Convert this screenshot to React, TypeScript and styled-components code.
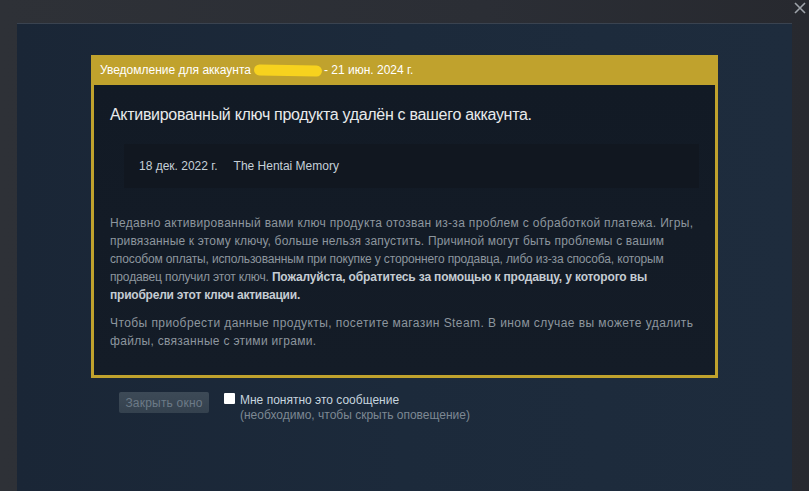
import React, { useState } from "react"
import styled, { createGlobalStyle } from "styled-components"

const GlobalStyle = createGlobalStyle`
  html, body {
    margin: 0;
    padding: 0;
    background: #2c2f35;
  }
  body {
    font-family: Arial, "Liberation Sans", sans-serif;
  }
`

const Window = styled.div`
  position: relative;
  width: 809px;
  height: 491px;
  box-sizing: border-box;
  padding: 23px 17px 0 17px;
  background: linear-gradient(90deg, #2e3137 0%, #2b2e35 60%, #27292f 100%);
  overflow: hidden;
`

const CloseButton = styled.div`
  position: absolute;
  top: 1px;
  right: 2px;
  width: 14px;
  height: 14px;
  display: flex;
  align-items: center;
  justify-content: center;
`

const Panel = styled.div`
  height: 100%;
  box-sizing: border-box;
  border-top: 1px solid #3a4350;
  background: linear-gradient(90deg, #1a2636 0%, #1c2a3b 50%, #1e2c3d 100%);
  padding: 31px 0 0 74px;
  display: flex;
  flex-direction: column;
`

const NoticeBox = styled.div`
  width: 627px;
  display: flex;
  flex-direction: column;
`

const NoticeHeader = styled.div`
  height: 30px;
  background: #c0a22d;
  display: flex;
  align-items: center;
  padding-left: 9px;
  font-size: 12px;
  color: #ffffff;
`

const Redacted = styled.span`
  display: inline-block;
  width: 68px;
  height: 11px;
  margin: 0 2px 0 3px;
  border-radius: 6px;
  background: #f7d21e;
  transform: rotate(1deg);
`

const NoticeBody = styled.div`
  border: 3px solid #c0a22d;
  border-top: none;
  background: linear-gradient(180deg, #121a25 0%, #141c27 100%);
  padding: 20px 16px 25px 16px;
`

const Title = styled.div`
  font-size: 16px;
  color: #e8eaec;
  line-height: 20px;
  letter-spacing: -0.3px;
`

const GameRow = styled.div`
  margin: 19px 0 0 14px;
  height: 44px;
  background: #111720;
  display: flex;
  align-items: center;
  gap: 16px;
  padding-left: 15px;
  font-size: 12px;
  color: #c6d0d8;
`

const Paragraph = styled.div<{ $first?: boolean }>`
  margin: ${({ $first }) => ($first ? "26px" : "10px")} 0 0 0;
  font-size: 12px;
  line-height: 18px;
  color: #8d969e;
`

const Line = styled.span<{ $tracking?: number }>`
  display: block;
  white-space: nowrap;
  letter-spacing: ${({ $tracking }) => $tracking ?? 0}px;
`

const Strong = styled.strong`
  color: #c5ccd3;
`

const Footer = styled.div`
  display: flex;
  align-items: flex-start;
  margin: 14px 0 0 28px;
  gap: 15px;
`

const CloseWindowButton = styled.button`
  width: 90px;
  height: 21px;
  padding: 0;
  border: none;
  border-radius: 2px;
  background: linear-gradient(180deg, #3d4a57 0%, #34414e 100%);
  color: #6c7a87;
  font-family: Arial, "Liberation Sans", sans-serif;
  font-size: 12px;
  letter-spacing: 0.2px;
`

const AckLabel = styled.label`
  display: flex;
  align-items: flex-start;
  gap: 5px;
  margin-top: 1px;
  cursor: pointer;
`

const CheckBox = styled.span`
  width: 11px;
  height: 11px;
  background: #ffffff;
  border-radius: 1px;
  display: flex;
  align-items: center;
  justify-content: center;
  font-size: 10px;
  color: #1b2838;
`

const AckText = styled.div`
  display: flex;
  flex-direction: column;
  font-size: 12px;
  line-height: 15px;
`

const AckMain = styled.span`
  color: #c6d4df;
`

const AckSub = styled.span`
  color: #7d8893;
`

export default function App() {
  const [checked, setChecked] = useState(false)

  return (
    <>
      <GlobalStyle />
      <Window>
        <CloseButton>
          <svg width="12" height="12" viewBox="0 0 12 12">
            <path d="M1 1 L11 11 M11 1 L1 11" stroke="#9ea3aa" strokeWidth="1.6" />
          </svg>
        </CloseButton>
        <Panel>
          <NoticeBox>
            <NoticeHeader>
              Уведомление для аккаунта
              <Redacted />
              - 21 июн. 2024 г.
            </NoticeHeader>
            <NoticeBody>
              <Title>Активированный ключ продукта удалён с вашего аккаунта.</Title>
              <GameRow>
                <span>18 дек. 2022 г.</span>
                <span>The Hentai Memory</span>
              </GameRow>
              <Paragraph $first>
                <Line $tracking={0.32}>
                  Недавно активированный вами ключ продукта отозван из-за проблем с обработкой платежа. Игры,
                </Line>
                <Line $tracking={0.18}>
                  привязанные к этому ключу, больше нельзя запустить. Причиной могут быть проблемы с вашим
                </Line>
                <Line $tracking={-0.15}>
                  способом оплаты, использованным при покупке у стороннего продавца, либо из-за способа, которым
                </Line>
                <Line $tracking={-0.15}>
                  продавец получил этот ключ.{" "}
                  <Strong>Пожалуйста, обратитесь за помощью к продавцу, у которого вы</Strong>
                </Line>
                <Line $tracking={-0.22}>
                  <Strong>приобрели этот ключ активации.</Strong>
                </Line>
              </Paragraph>
              <Paragraph>
                <Line $tracking={0.42}>
                  Чтобы приобрести данные продукты, посетите магазин Steam. В ином случае вы можете удалить
                </Line>
                <Line $tracking={0.3}>файлы, связанные с этими играми.</Line>
              </Paragraph>
            </NoticeBody>
          </NoticeBox>
          <Footer>
            <CloseWindowButton>Закрыть окно</CloseWindowButton>
            <AckLabel onClick={() => setChecked((c) => !c)}>
              <CheckBox>{checked ? "✓" : ""}</CheckBox>
              <AckText>
                <AckMain>Мне понятно это сообщение</AckMain>
                <AckSub>(необходимо, чтобы скрыть оповещение)</AckSub>
              </AckText>
            </AckLabel>
          </Footer>
        </Panel>
      </Window>
    </>
  )
}
